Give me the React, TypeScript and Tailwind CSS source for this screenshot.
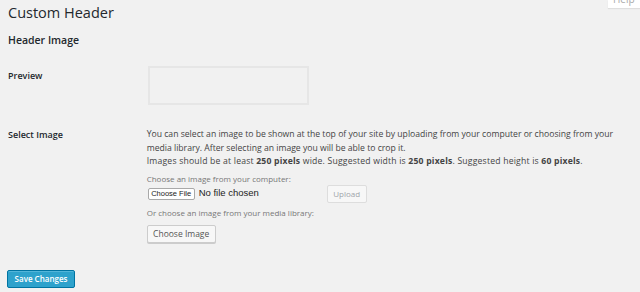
import React from 'react';

const sans = { fontFamily: '"Open Sans", "Liberation Sans", sans-serif' };
const native = { fontFamily: '"Liberation Sans", Arial, sans-serif' };

const HelpTab = () => (
  <div className="absolute top-0 right-0 w-[32px] h-[8px] overflow-hidden bg-white shadow-[0_1px_1px_rgba(0,0,0,0.08)]">
    <div className="-mt-[8px] pl-[5px] text-[10px] leading-[14px] text-[#aaa]">Help</div>
  </div>
);

const App = () => {
  return (
    <div className="relative w-[640px] h-[292px] overflow-hidden bg-[#f1f1f1] text-[#444]" style={sans}>
      <HelpTab />
      <div className="px-2">
        <h1 className="pt-[1px] text-[14.5px] leading-[23px] text-[#23282d]">Custom Header</h1>
        <h2 className="mt-2 text-[10.5px] font-semibold leading-[16px] text-[#23282d]">Header Image</h2>

        {/* Preview row */}
        <div className="flex mt-[18px]">
          <div className="w-[140px] pt-[2.5px] text-[9px] font-semibold leading-[14px] text-[#23282d]">Preview</div>
          <div className="w-[161px] h-[39px] border-2 border-[#e6e6e6]" />
        </div>

        {/* Select image row */}
        <div className="flex mt-[23px]">
          <div className="w-[140px] text-[9px] font-semibold leading-[13.5px] text-[#23282d]">Select Image</div>
          <div className="w-[490px]">
            <p className="text-[8.65px] leading-[13.5px]">
              You can select an image to be shown at the top of your site by uploading from your computer or choosing from your media library. After selecting an image you will be able to crop it.
              <br />
              <span className="tracking-[0.2px]">
                Images should be at least <span className="font-bold">250 pixels</span> wide. Suggested width is <span className="font-bold">250 pixels</span>. Suggested height is <span className="font-bold">60 pixels</span>.
              </span>
            </p>
            <p className="mt-[4px] text-[8px] leading-[12px] text-[#777]">Choose an image from your computer:</p>
            <div className="flex items-center h-[18px]">
              <div className="flex items-center w-[180px]">
                <button className="ml-px w-[47px] h-[12px] rounded-[2px] border border-[#a9a9a9] bg-white text-[7.5px] leading-[10px] text-[#222]" style={native}>
                  Choose File
                </button>
                <span className="ml-[4px] text-[9.5px] text-[#222]" style={native}>No file chosen</span>
              </div>
              <button className="w-[40px] h-[18px] rounded-[2px] border border-[#dddddd] bg-[#f7f7f7] text-[8px] text-[#a0a5aa]">Upload</button>
            </div>
            <p className="mt-[4px] text-[8px] leading-[12px] text-[#777]">Or choose an image from your media library:</p>
            <button className="w-[69px] h-[18px] rounded-[2px] border border-[#cccccc] bg-[#f7f7f7] text-[8.5px] text-[#555] shadow-[0_1px_0_#cccccc]">
              Choose Image
            </button>
          </div>
        </div>

        <button className="mt-[27px] -ml-px w-[68px] h-[18px] rounded-[2px] border border-[#0074a2] bg-[#2ea2cc] text-[8px] font-semibold text-white shadow-[inset_0_1px_0_rgba(120,200,230,0.5)]">
          Save Changes
        </button>
      </div>
    </div>
  );
};

export default App;
